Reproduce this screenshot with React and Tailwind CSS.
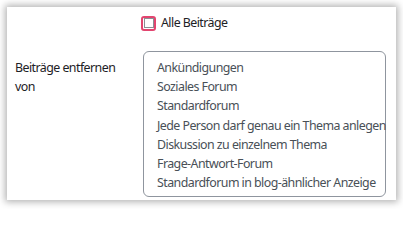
import React from "react";

const FORUMS = [
  "Ankündigungen",
  "Soziales Forum",
  "Standardforum",
  "Jede Person darf genau ein Thema anlegen",
  "Diskussion zu einzelnem Thema",
  "Frage-Antwort-Forum",
  "Standardforum in blog-ähnlicher Anzeige",
];

export default function App() {
  return (
    <div className="w-[403px] h-[209px] bg-white p-[7px] pb-[9px] font-['Noto_Sans',sans-serif] text-[12.4px] tracking-[-0.55px]">
      <div className="h-full bg-white shadow-[0_0_7px_2px_rgba(0,0,0,0.3)] grid grid-cols-[128px_1fr] content-start pl-2">
        <div />
        <label className="flex items-center gap-[5px] mt-[7px] -ml-[2px] text-[#1d2125]">
          <span className="w-[15px] h-[15px] rounded-[3px] border-2 border-[#e2456f] flex items-center justify-center">
            <span className="w-[10px] h-[10px] border border-[#8a8f94] bg-white" />
          </span>
          <span>Alle Beiträge</span>
        </label>

        <div className="mt-[18px] pt-[7px] leading-[19px] text-[#1d2125]">
          Beiträge entfernen
          <br />
          von
        </div>
        <ul className="mt-[18px] w-[243px] h-[146px] border border-[#8f959e] rounded-[6px] pt-[6px] pl-[13px] text-[#495057] leading-[19.3px]">
          {FORUMS.map((f) => (
            <li key={f} className="whitespace-nowrap">{f}</li>
          ))}
        </ul>
      </div>
    </div>
  );
}
